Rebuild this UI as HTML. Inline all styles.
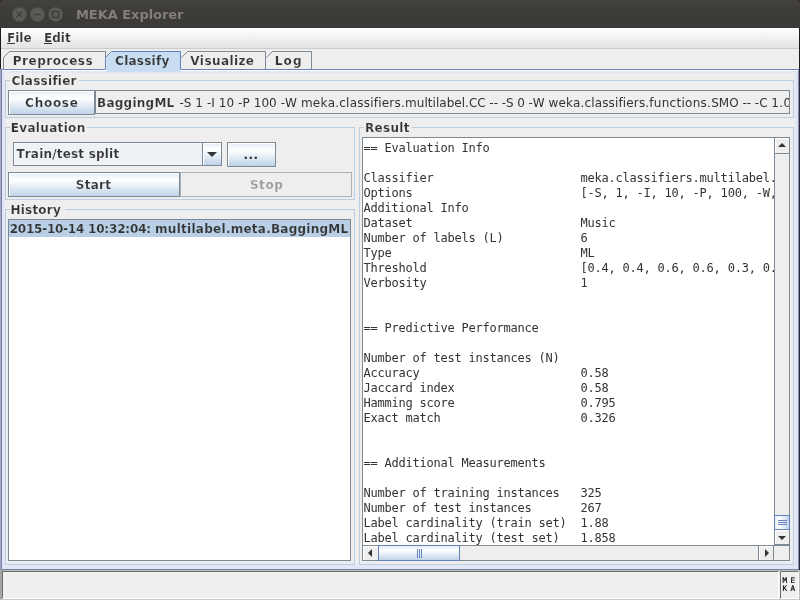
<!DOCTYPE html>
<html lang="en">
<head>
<meta charset="utf-8">
<title>MEKA Explorer</title>
<style>
*{box-sizing:border-box;margin:0;padding:0}
html,body{width:800px;height:600px;overflow:hidden;background:#eeeeee}
body{font-family:"DejaVu Sans","Liberation Sans",sans-serif;font-size:12px;font-weight:bold;color:#333333}
#app{position:absolute;left:0;top:0;width:800px;height:600px;overflow:hidden;will-change:transform}
.a{position:absolute}
.tx{position:absolute;white-space:nowrap;line-height:14px;height:14px;font-kerning:none}
u{text-decoration:none}
/* title bar */
#titlebar{left:0;top:0;width:800px;height:28px;background:linear-gradient(#42413c 0,#3d3c38 40%,#3b3a36 100%)}
#title{left:75.94px;top:6px;letter-spacing:-0.042px;font-family:"DejaVu Sans","Liberation Sans",sans-serif;font-size:13px;line-height:18px;height:18px;color:#827f79;font-weight:bold}
/* menu */
#menubar{left:0;top:28px;width:800px;height:20px;background:linear-gradient(#ffffff,#e3e3e3)}
/* tabs */
/* buttons */
.btn{border:1px solid #7d8a96;background:linear-gradient(#e4edf6 0%,#ffffff 30%,#e4edf6 60%,#bfd3e8 100%);box-shadow:inset 1px 1px 0 #ffffff}
.tb{border:1px solid #bccddf}
.tt{background:#eeeeee}
#res{left:363px;top:138px;width:411px;height:407px;background:#fff;overflow:hidden}
#res pre{position:absolute;left:0.6px;top:3px;font-family:"DejaVu Sans Mono","Liberation Mono",monospace;font-weight:normal;font-size:12px;line-height:15px;letter-spacing:-0.224px;white-space:pre;color:#333333}
.arr{width:0;height:0;border-style:solid;border-color:transparent}
</style>
</head>
<body>
<div id="app">

<!-- window title bar -->
<div class="a" style="left:0;top:0;width:800px;height:6px;background:#2b2029"></div>
<div id="titlebar" class="a" style="border-radius:4px 4px 0 0">
  <svg class="a" style="left:8px;top:3px" width="60" height="23" viewBox="0 0 60 23">
    <g fill="#5c5a55" stroke="#4b4a45" stroke-width="1">
      <circle cx="11.4" cy="11.4" r="7.2"/><circle cx="29.4" cy="11.4" r="7.2"/><circle cx="47.6" cy="11.4" r="7.2"/>
    </g>
    <g fill="none" stroke="#3a3935" stroke-width="1.2">
      <path d="M8.6 8.6 L14.2 14.2 M14.2 8.6 L8.6 14.2"/>
      <path d="M26.2 11.5 H32.6"/>
      <rect x="44.6" y="8.4" width="6" height="6"/>
    </g>
  </svg>
  <div id="title" class="tx">MEKA Explorer</div>
</div>

<!-- menu bar -->
<div id="menubar" class="a"></div>
<div class="a" style="left:0;top:48px;width:800px;height:1px;background:#cccccc"></div>
<div id="m1" class="tx" style="left:7px;top:31px;-webkit-text-stroke:0.18px #f1f1f1"><u>F</u>ile</div>
<div id="m2" class="tx" style="left:44px;top:31px;-webkit-text-stroke:0.18px #f1f1f1"><u>E</u>dit</div>

<div class="a" style="left:7px;top:43px;width:8px;height:1px;background:#333333"></div>
<div class="a" style="left:44px;top:43px;width:8px;height:1px;background:#333333"></div>
<!-- tabs -->
<svg class="a" style="left:0;top:49px" width="800" height="26" viewBox="0 0 800 26">
  <rect x="1" y="0" width="798" height="20" fill="#eeeeee"/>
  <rect x="1" y="21" width="798" height="1" fill="#ffffff"/>
  <rect x="1" y="22" width="798" height="2" fill="#dfe9f4"/>
  <path d="M106.5 20.5 V8.5 L112.5 2.5 H180.5 V23 H106.5 Z" fill="#c8ddf2"/>
  <g fill="none" stroke="#7d8a96" stroke-width="1">
    <path d="M3.5 20 V8.5 L9.5 2.5 H105.5 V20"/>
    <path d="M181.5 8.5 L187.5 2.5 H265.5 V20"/>
    <path d="M266.5 8.5 L272.5 2.5 H311.5 V20"/>
  </g>
  <path d="M105.5 20 V8.5 L111.5 2.5 H180.5 V20" fill="none" stroke="#6382bf" stroke-width="1"/>
  <path d="M1 20.5 H105.5 M180.5 20.5 H799" fill="none" stroke="#6382bf" stroke-width="1"/>
</svg>
<div id="t1" class="tx" style="left:12.72px;top:54px;letter-spacing:0.533px;-webkit-text-stroke:0.18px #eeeeee">Preprocess</div>
<div id="t2" class="tx" style="left:115.1px;top:54px;letter-spacing:0.241px;-webkit-text-stroke:0.18px #c8ddf2">Classify</div>
<div id="t3" class="tx" style="left:190.17px;top:54px;letter-spacing:0.415px;-webkit-text-stroke:0.18px #eeeeee">Visualize</div>
<div id="t4" class="tx" style="left:274.72px;top:54px;letter-spacing:1.232px;-webkit-text-stroke:0.18px #eeeeee">Log</div>

<!-- content border of tabbed pane -->
<div class="a" style="left:0;top:28px;width:1px;height:41px;background:#1c1c1c"></div>
<div class="a" style="left:799px;top:28px;width:1px;height:41px;background:#1c1c1c"></div>
<div class="a" style="left:0;top:69px;width:1px;height:501px;background:#a3a6ca"></div>
<div class="a" style="left:1px;top:69px;width:1px;height:501px;background:#787c9f"></div>
<div class="a" style="left:2px;top:71px;width:3px;height:497px;background:#e2e7f7"></div>
<div class="a" style="left:795px;top:71px;width:3px;height:497px;background:#dde6f6"></div>
<div class="a" style="left:798px;top:69px;width:1px;height:501px;background:#8a8ea8"></div>
<div class="a" style="left:799px;top:69px;width:1px;height:501px;background:#2a2a3c"></div>
<div class="a" style="left:2px;top:565px;width:796px;height:4px;background:#e2e7f7"></div>
<div class="a" style="left:1px;top:569px;width:798px;height:1px;background:#7c8096"></div>

<!-- Classifier -->
<div class="a tb" style="left:5px;top:80px;width:789px;height:38px"></div>
<div class="a tt" style="left:10px;top:75px;width:69px;height:12px"></div>
<div id="l1" class="tx" style="left:11.43px;top:74px;letter-spacing:0.257px;-webkit-text-stroke:0.18px #eeeeee">Classifier</div>
<div class="a btn" style="left:8px;top:90px;width:87px;height:25px"></div>
<div id="b1" class="tx" style="left:25.1px;top:96px;letter-spacing:0.731px;-webkit-text-stroke:0.18px #f3f7fb">Choose</div>
<div class="a" style="left:95px;top:90px;width:695px;height:24px;border:1px solid #7d8a96;background:#eeeeee"></div>
<div class="a" style="left:96px;top:91px;width:693px;height:22px;overflow:hidden"><div id="cf1" class="tx" style="left:1px;top:5px;letter-spacing:0.25px;-webkit-text-stroke:0.18px #eeeeee">BaggingML</div><div id="cf2" class="tx" style="left:79.60px;top:5px;font-weight:normal;white-space:pre"> <span style="letter-spacing:0.059px">-S 1 -I </span><span style="letter-spacing:0.072px">10 -P 100 -W </span><span style="letter-spacing:0.226px">meka.classifiers.</span><span style="letter-spacing:0.037px">multilabel.</span><span style="letter-spacing:-0.057px">CC -- -S 0 -W </span><span style="letter-spacing:0.144px">weka.classifiers.</span><span style="letter-spacing:0.280px">functions.</span><span style="letter-spacing:-0.006px">SMO -- -C </span><span style="letter-spacing:0.339px">1.</span><span style="letter-spacing:0.339px">0</span></div></div>

<!-- Evaluation -->
<div class="a tb" style="left:5px;top:127px;width:350px;height:73px"></div>
<div class="a tt" style="left:10px;top:122px;width:77px;height:12px"></div>
<div id="l2" class="tx" style="left:10.69px;top:121px;letter-spacing:0.338px;-webkit-text-stroke:0.18px #eeeeee">Evaluation</div>
<div class="a" style="left:13px;top:142px;width:209px;height:24px;border:1px solid #7d8a96;background:#eef1f5;box-shadow:inset 1px 1px 0 #fafbfc"></div>
<div class="a btn" style="left:202px;top:142px;width:20px;height:24px"></div>
<div class="a arr" style="left:207px;top:152px;border-width:5px 5px 0 5px;border-top-color:#333333"></div>
<div id="cb" class="tx" style="left:16.38px;top:147px;letter-spacing:0.193px;-webkit-text-stroke:0.18px #eef1f5">Train/test split</div>
<div class="a btn" style="left:227px;top:142px;width:49px;height:25px"></div>
<div id="b2" class="tx" style="left:243.5px;top:148px;letter-spacing:0.45px">...</div>
<div class="a btn" style="left:8px;top:172px;width:172px;height:25px"></div>
<div id="b3" class="tx" style="left:75.76px;top:178px;letter-spacing:0.288px;-webkit-text-stroke:0.18px #f3f7fb">Start</div>
<div class="a" style="left:180px;top:172px;width:172px;height:25px;border:1px solid #a9b1b9;background:#eeeeee"></div>
<div id="b4" class="tx" style="left:249.93px;top:178px;color:#999999;letter-spacing:0.552px;-webkit-text-stroke:0.18px #eeeeee">Stop</div>

<!-- History -->
<div class="a tb" style="left:5px;top:209px;width:350px;height:356px"></div>
<div class="a tt" style="left:10px;top:204px;width:55px;height:12px"></div>
<div id="l3" class="tx" style="left:10.52px;top:203px;letter-spacing:0.194px;-webkit-text-stroke:0.18px #eeeeee">History</div>
<div class="a" style="left:8px;top:219px;width:343px;height:342px;border:1px solid #7d8a96;background:#ffffff"></div>
<div class="a" style="left:9px;top:220px;width:341px;height:17px;background:#b8cfe5"></div>
<div id="h1" class="tx" style="left:9.75px;top:222px;-webkit-text-stroke:0.18px #b8cfe5"><span style="letter-spacing:-0.249px">2015-10-14 </span><span style="letter-spacing:-0.161px">10:32:04: </span><span style="letter-spacing:0.284px">multilabel.</span><span style="letter-spacing:0.222px">meta.</span><span style="letter-spacing:0.240px">BaggingML</span></div>

<!-- Result -->
<div class="a tb" style="left:359px;top:127px;width:435px;height:438px"></div>
<div class="a tt" style="left:364px;top:122px;width:48px;height:12px"></div>
<div id="l4" class="tx" style="left:365.0px;top:121px;letter-spacing:0.3px;-webkit-text-stroke:0.18px #eeeeee">Result</div>
<div class="a" style="left:362px;top:137px;width:428px;height:424px;border:1px solid #7d8a96;background:#eeeeee"></div>
<div id="res" class="a"><pre id="rp">== Evaluation Info

Classifier                     meka.classifiers.multilabel.
Options                        [-S, 1, -I, 10, -P, 100, -W,
Additional Info                
Dataset                        Music
Number of labels (L)           6
Type                           ML
Threshold                      [0.4, 0.4, 0.6, 0.6, 0.3, 0.
Verbosity                      1


== Predictive Performance

Number of test instances (N)   
Accuracy                       0.58
Jaccard index                  0.58
Hamming score                  0.795
Exact match                    0.326


== Additional Measurements

Number of training instances   325
Number of test instances       267
Label cardinality (train set)  1.88
Label cardinality (test set)   1.858
</pre></div>

<!-- vertical scrollbar -->
<div class="a" style="left:774px;top:138px;width:1px;height:407px;background:#7d8a96"></div>
<div class="a" style="left:775px;top:153px;width:14px;height:1px;background:#7d8a96"></div>
<div class="a arr" style="left:778px;top:143px;border-width:0 4px 4px 4px;border-bottom-color:#333333"></div>
<div class="a" style="left:774px;top:515px;width:16px;height:15px;border:1px solid #6382bf;background:linear-gradient(90deg,#e4edf6 0%,#ffffff 30%,#e4edf6 60%,#bfd3e8 100%)"></div>
<div class="a" style="left:778px;top:520px;width:9px;height:1px;background:#6382bf"></div>
<div class="a" style="left:778px;top:522px;width:9px;height:1px;background:#6382bf"></div>
<div class="a" style="left:778px;top:524px;width:9px;height:1px;background:#6382bf"></div>
<div class="a arr" style="left:778px;top:536px;border-width:4px 4px 0 4px;border-top-color:#333333"></div>
<div class="a" style="left:775px;top:544px;width:14px;height:1px;background:#7d8a96"></div>

<div class="a" style="left:775px;top:138px;width:14px;height:15px;box-shadow:inset 1px 1px 0 #ffffff"></div>
<div class="a" style="left:775px;top:530px;width:14px;height:14px;box-shadow:inset 1px 1px 0 #ffffff"></div>
<div class="a" style="left:363px;top:546px;width:15px;height:14px;box-shadow:inset 1px 1px 0 #ffffff"></div>
<div class="a" style="left:759px;top:546px;width:14px;height:14px;box-shadow:inset 1px 1px 0 #ffffff"></div>
<!-- horizontal scrollbar -->
<div class="a" style="left:363px;top:545px;width:427px;height:1px;background:#7d8a96"></div>
<div class="a arr" style="left:368px;top:549px;border-width:4px 4px 4px 0;border-right-color:#333333"></div>
<div class="a" style="left:378px;top:545px;width:82px;height:16px;border:1px solid #6382bf;background:linear-gradient(#e4edf6 0%,#ffffff 30%,#e4edf6 60%,#bfd3e8 100%)"></div>
<div class="a" style="left:417px;top:549px;width:1px;height:9px;background:#6382bf"></div>
<div class="a" style="left:419px;top:549px;width:1px;height:9px;background:#6382bf"></div>
<div class="a" style="left:421px;top:549px;width:1px;height:9px;background:#6382bf"></div>
<div class="a" style="left:758px;top:546px;width:1px;height:14px;background:#7d8a96"></div>
<div class="a arr" style="left:765px;top:549px;border-width:4px 0 4px 4px;border-left-color:#333333"></div>
<div class="a" style="left:773px;top:546px;width:1px;height:14px;background:#7d8a96"></div>

<!-- status bar -->
<div class="a" style="left:0;top:570px;width:800px;height:30px;background:#eeeeee"></div>
<div class="a" style="left:2px;top:570px;width:797px;height:1px;background:#b9bbc2"></div>
<div class="a" style="left:0;top:570px;width:2px;height:30px;background:#a4a4a4"></div>
<div class="a" style="left:2px;top:571px;width:777px;height:28px;border:1px solid;border-color:#6e6e6e #ffffff #ffffff #6e6e6e;background:#efefed"></div>
<div class="a" style="left:780px;top:571px;width:19px;height:28px;border:1px solid;border-color:#6e6e6e #ffffff #ffffff #6e6e6e;background:#efefed"></div>
<div class="a" style="left:799px;top:570px;width:1px;height:30px;background:#b8b8b8"></div>
<div class="a" style="left:0;top:599px;width:800px;height:1px;background:#c8c8c8"></div>
<div id="ic" class="a" style="left:782.6px;top:577px;width:17px;height:16px;font-family:'DejaVu Sans Mono','Liberation Mono',monospace;font-weight:normal;font-size:7.6px;line-height:8px;letter-spacing:3.42px;white-space:pre;color:#000000;-webkit-text-stroke:0.2px #000">ME
KA</div>
</div>
</body>
</html>
